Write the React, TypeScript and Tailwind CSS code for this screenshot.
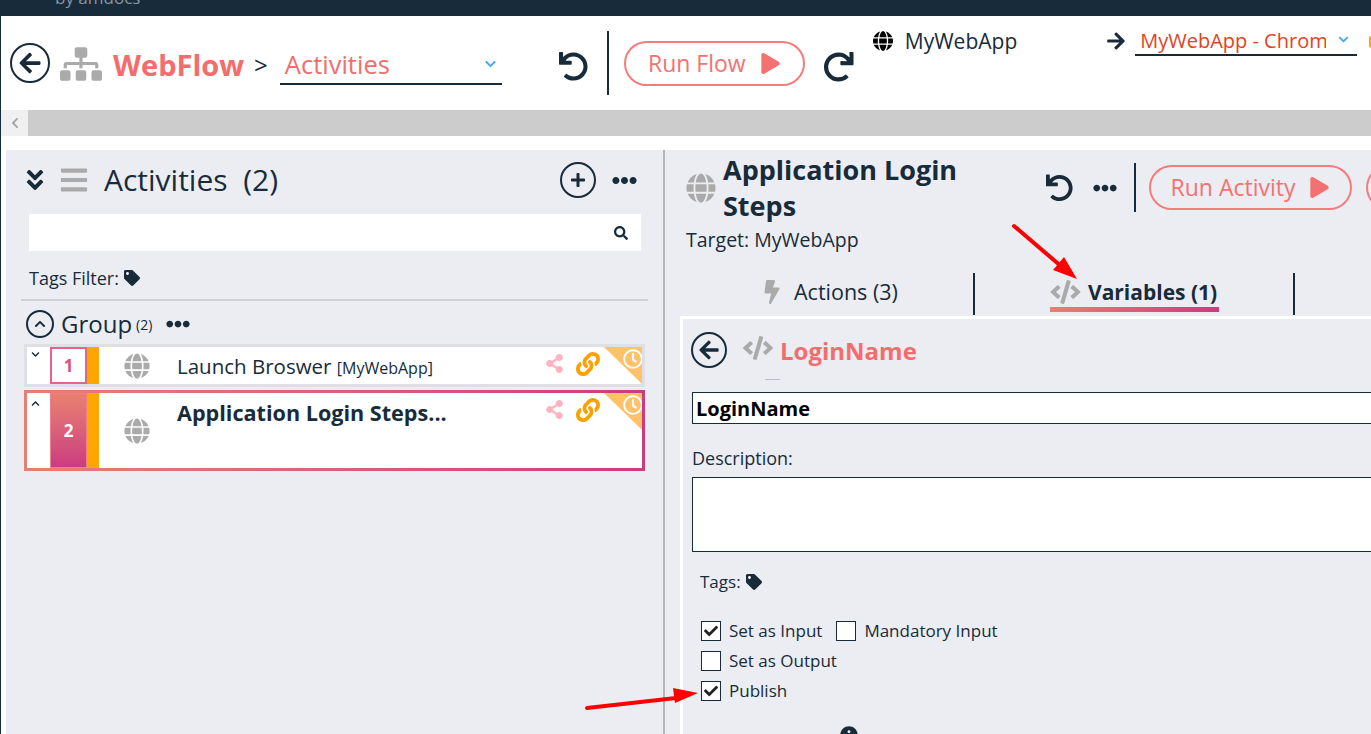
import React from 'react';
import {
  FaAngleDoubleDown,
  FaArrowLeft,
  FaArrowRight,
  FaBars,
  FaBolt,
  FaCheck,
  FaChevronDown,
  FaChevronUp,
  FaCode,
  FaEllipsisH,
  FaGlobe,
  FaInfoCircle,
  FaLink,
  FaPlay,
  FaPlus,
  FaRedo,
  FaRegClock,
  FaSearch,
  FaShareAlt,
  FaSitemap,
  FaTag,
  FaUndo,
} from 'react-icons/fa';

const BackButton: React.FC<{ size: string; icon: string }> = ({ size, icon }) => (
  <div className={`${size} flex shrink-0 items-center justify-center rounded-full border-2 border-[#172b3a] text-[#172b3a]`}>
    <FaArrowLeft className={icon} />
  </div>
);

const RunButton: React.FC<{ label: string; width: string; height: string }> = ({ label, width, height }) => (
  <div className={`${width} ${height} flex shrink-0 items-center justify-center gap-[14px] rounded-full border-2 border-[#f47c7c] bg-transparent text-[23px] text-[#f47171]`}>
    {label}
    <FaPlay className="h-[21px] w-[21px] shrink-0" />
  </div>
);

const Checkbox: React.FC<{ checked?: boolean; label: string; className?: string }> = ({ checked, label, className }) => (
  <div className={`flex h-[21px] items-center text-[17px] text-[#172b3a] ${className ?? ''}`}>
    <div className="flex h-[20px] w-[20px] shrink-0 items-center justify-center border border-[#172b3a] bg-white">
      {checked && <FaCheck className="h-[14px] w-[14px] text-[#222]" />}
    </div>
    <span className="ml-[8px] pt-px">{label}</span>
  </div>
);

const ActivityRow: React.FC<{
  index: number;
  active?: boolean;
  height: string;
  children: React.ReactNode;
}> = ({ index, active, height, children }) => (
  <div className={`${height} p-[3px] ${active ? 'bg-gradient-to-r from-[#e8806f] to-[#cc3a80]' : 'bg-[#dfe0e5]'}`}>
    <div className="relative flex h-full overflow-hidden bg-white">
      <div className="w-[23px] shrink-0 pl-[4px] pt-[1px] text-[#172b3a]">
        {active ? <FaChevronUp className="mt-[5px] h-[9px] w-[9px]" /> : <FaChevronDown className="mt-[2px] h-[9px] w-[9px]" />}
      </div>
      {active ? (
        <div className="flex w-[37px] shrink-0 items-center justify-center border border-[#ee7f8c] bg-gradient-to-b from-[#e8806f] to-[#cc3a80] text-[17px] font-bold text-white">
          {index}
        </div>
      ) : (
        <div className="flex w-[37px] shrink-0 items-center justify-center border-2 border-[#e5648a] text-[17px] font-bold text-[#d9557f]">
          {index}
        </div>
      )}
      <div className="w-[12px] shrink-0 bg-[#ffa500]" />
      <div className="flex w-[78px] shrink-0 items-center pl-[25px]">
        <FaGlobe className="h-[26px] w-[26px] shrink-0 text-[#aaaaaa]" />
      </div>
      <div className="min-w-0 flex-1">{children}</div>
      <FaShareAlt className="absolute left-[518px] top-[7px] h-[19px] w-[19px] text-[#ffb3c1]" />
      <FaLink className="absolute left-[549px] top-[5px] h-[24px] w-[24px] text-[#ffa000]" />
      <div className="absolute right-0 top-0 h-[37px] w-[38px] bg-[#ffc26b] [clip-path:polygon(0_0,100%_0,100%_100%)]" />
      <FaRegClock className="absolute right-[-1px] top-[2px] h-[20px] w-[20px] text-white" />
    </div>
  </div>
);

export default function App() {
  return (
    <div className="relative h-[734px] w-[1371px] overflow-hidden bg-white font-['Open_Sans',sans-serif] text-[#172b3a]">
      {/* Top strip */}
      <div className="relative h-[16px] overflow-hidden bg-[#172b3a]">
        <span className="absolute left-[55px] top-[-15px] text-[17px] text-[#8a97a1]">by amdocs</span>
      </div>

      <div className="flex h-[718px] border-l border-[#172b3a]">
        <div className="flex min-w-0 flex-1 flex-col">
          {/* Flow header */}
          <div className="flex h-[94px] shrink-0 overflow-hidden">
            <div className="ml-[9px] mt-[27px] shrink-0">
              <BackButton size="h-[40px] w-[40px]" icon="h-[24px] w-[24px]" />
            </div>
            <FaSitemap className="ml-[10px] mt-[27px] h-[42px] w-[42px] shrink-0 text-[#aaaaaa]" />
            <div className="ml-[11px] mt-[30px] shrink-0 text-[29px] font-bold leading-[38px] text-[#f56c6c]">WebFlow</div>
            <div className="ml-[10px] mt-[33px] shrink-0 text-[24px] leading-[32px]">&gt;</div>
            <div className="ml-[12px] mt-[34px] flex h-[35px] w-[222px] shrink-0 items-start justify-between border-b-2 border-[#172b3a] pl-[5px] pr-[5px]">
              <span className="mt-[-2px] text-[25.5px] leading-[32px] text-[#f56c6c]">Activities</span>
              <FaChevronDown className="mt-[8px] h-[12px] w-[13px] shrink-0 text-[#44a6f5]" />
            </div>
            <FaUndo className="ml-[56px] mt-[36px] h-[29px] w-[31px] shrink-0" />
            <div className="ml-[18px] mt-[15px] h-[64px] w-[2px] shrink-0 bg-[#172b3a]" />
            <div className="ml-[15px] mt-[25px] shrink-0">
              <RunButton label="Run Flow" width="w-[181px]" height="h-[45px]" />
            </div>
            <FaRedo className="ml-[18px] mt-[36px] h-[30px] w-[31px] shrink-0" />
            <FaGlobe className="ml-[19px] mt-[14px] h-[22px] w-[20px] shrink-0 text-black" />
            <div className="ml-[12px] mt-[11px] shrink-0 text-[21px] leading-[28px]">MyWebApp</div>
            <FaArrowRight className="ml-[89px] mt-[15px] h-[20px] w-[20px] shrink-0" />
            <div className="ml-[9px] mt-[9px] flex h-[31px] w-[222px] shrink-0 items-start border-b-2 border-[#172b3a] pl-[5px]">
              <span className="mt-px w-[186px] shrink-0 overflow-hidden whitespace-nowrap text-[20px] leading-[30px] text-[#e2431e]">MyWebApp - Chrome</span>
              <FaChevronDown className="ml-[11px] mt-[9px] h-[11px] w-[13px] shrink-0 text-[#44a6f5]" />
            </div>
            <div className="ml-[12px] mt-[20px] h-[12px] w-[4px] shrink-0 rounded-full bg-[#ffa500]" />
          </div>

          {/* Horizontal scroller */}
          <div className="flex h-[26px] shrink-0 bg-[#cccccc]">
            <div className="flex w-[27px] items-center justify-center bg-[#f0f0f0] text-[#a6a6a6]">
              <FaChevronDown className="h-[12px] w-[12px] rotate-90" />
            </div>
          </div>
          <div className="h-[14px] shrink-0" />

          <div className="flex min-h-0 flex-1 pl-[5px]">
            {/* Activities panel */}
            <div className="w-[657px] shrink-0 bg-[#ecedf3] pl-[15px]">
              <div className="flex h-[60px] items-center">
                <FaAngleDoubleDown className="ml-[5px] h-[26px] w-[18px] shrink-0" />
                <FaBars className="ml-[16px] h-[30px] w-[28px] shrink-0 text-[#aaaaaa]" />
                <div className="ml-[16px] whitespace-pre text-[30px] leading-[40px]">Activities  (2)</div>
                <div className="ml-[282px] flex h-[36px] w-[36px] shrink-0 items-center justify-center rounded-full border-2 border-[#172b3a]">
                  <FaPlus className="h-[16px] w-[16px]" />
                </div>
                <FaEllipsisH className="ml-[16px] h-[25px] w-[25px] shrink-0" />
              </div>
              <div className="ml-[8px] mt-[4px] flex h-[37px] w-[612px] items-center justify-end bg-white pr-[13px]">
                <FaSearch className="h-[14px] w-[14px]" />
              </div>
              <div className="ml-[8px] mt-[15px] flex h-[24px] items-center text-[18px]">
                Tags Filter:
                <FaTag className="ml-[5px] h-[16px] w-[16px]" />
              </div>
              <div className="mr-[15px] mt-[9px] h-[2px] bg-[#cfd0d4]" />
              <div className="ml-[5px] mt-[9px] flex h-[28px] items-center">
                <div className="flex h-[28px] w-[28px] items-center justify-center rounded-full border-2 border-[#172b3a]">
                  <FaChevronUp className="h-[12px] w-[12px]" />
                </div>
                <span className="ml-[7px] text-[24px] leading-[32px]">Group</span>
                <span className="ml-[4px] text-[14px]">(2)</span>
                <FaEllipsisH className="ml-[14px] h-[24px] w-[24px]" />
              </div>
              <div className="ml-[3px] mt-[6px] flex w-[621px] flex-col gap-[3px]">
                <ActivityRow index={1} height="h-[43px]">
                  <div className="whitespace-nowrap pt-[4px] text-[20.5px] leading-[30px]">
                    Launch Broswer <span className="text-[16px]">[MyWebApp]</span>
                  </div>
                </ActivityRow>
                <ActivityRow index={2} active height="h-[81px]">
                  <div className="whitespace-nowrap text-[21.6px] font-bold leading-[40px]">Application Login Steps...</div>
                </ActivityRow>
              </div>
            </div>

            <div className="w-[2px] shrink-0 bg-[#b5b5b5]" />

            {/* Activity details */}
            <div className="min-w-0 flex-1 overflow-hidden bg-[#ecedf3]">
              <div className="flex h-[123px] pl-[21px]">
                <div className="w-[262px] shrink-0">
                  <div className="flex h-[72px] w-[290px] items-center">
                    <FaGlobe className="mt-[4px] h-[30px] w-[30px] shrink-0 text-[#aaaaaa]" />
                    <div className="ml-[7px] w-[270px] pt-[4px] text-[27px] font-bold leading-[36px]">
                      Application Login Steps
                    </div>
                  </div>
                  <div className="mt-[5px] text-[19.5px] leading-[26px]">Target: MyWebApp</div>
                </div>
                <div className="mt-[13px] flex h-[49px] shrink-0 items-center pl-[98px]">
                  <FaUndo className="h-[28px] w-[27px] shrink-0" />
                  <FaEllipsisH className="ml-[20px] h-[24px] w-[24px] shrink-0" />
                  <div className="ml-[17px] h-[49px] w-[2px] shrink-0 bg-[#172b3a]" />
                  <div className="ml-[13px] shrink-0">
                    <RunButton label="Run Activity" width="w-[203px]" height="h-[45px]" />
                  </div>
                  <div className="ml-[14px] h-[45px] w-[30px] shrink-0 rounded-l-full border-2 border-r-0 border-[#f47c7c]" />
                </div>
              </div>

              {/* Tabs */}
              <div className="flex h-[42px]">
                <div className="flex w-[310px] shrink-0 items-center border-r-2 border-[#172b3a] pb-[4px] pl-[98px]">
                  <FaBolt className="h-[24px] w-[18px] shrink-0 text-[#aaaaaa]" />
                  <span className="ml-[13px] text-[21.5px] leading-[28px]">Actions (3)</span>
                </div>
                <div className="w-[320px] shrink-0 border-r-2 border-[#172b3a] pl-[75px]">
                  <div className="flex h-[39px] w-[169px] items-center border-b-[5px] border-transparent pt-[3px] [border-image:linear-gradient(to_right,#e8806f,#cc3a80)_1]">
                    <FaCode className="h-[24px] w-[31px] shrink-0 text-[#aaaaaa]" />
                    <span className="ml-[7px] whitespace-nowrap text-[21px] font-bold leading-[28px]">Variables (1)</span>
                  </div>
                </div>
              </div>

              {/* Variable editor */}
              <div className="ml-[15px] mt-[1px] h-[422px] border-l-[3px] border-t-[3px] border-white pl-[8px]">
                <div className="flex h-[60px] items-start pt-[13px]">
                  <BackButton size="h-[36px] w-[36px]" icon="h-[22px] w-[22px]" />
                  <FaCode className="ml-[16px] mt-[3px] h-[26px] w-[30px] shrink-0 text-[#aaaaaa]" />
                  <span className="ml-[7px] mt-[2px] text-[24px] font-bold leading-[34px] text-[#f56c6c]">LoginName</span>
                </div>
                <div className="ml-[74px] h-px w-[15px] bg-[#b9bec4]" />
                <div className="-mr-[5px] ml-px mt-[12px] flex h-[32px] items-center border border-[#172b3a] bg-white pl-[3px] pt-px text-[20px] font-bold text-black">
                  LoginName
                </div>
                <div className="ml-px mt-[22px] text-[18px] leading-[24px]">Description:</div>
                <div className="-mr-[5px] ml-px mt-[7px] h-[75px] border border-[#172b3a] bg-white" />
                <div className="ml-[9px] mt-[18px] flex h-[24px] items-center text-[17px]">
                  Tags:
                  <FaTag className="ml-[5px] h-[16px] w-[16px]" />
                </div>
                <div className="ml-[10px] mt-[26px] flex flex-col gap-[9px]">
                  <div className="flex">
                    <Checkbox checked label="Set as Input" />
                    <Checkbox label="Mandatory Input" className="ml-[14px]" />
                  </div>
                  <Checkbox label="Set as Output" />
                  <Checkbox checked label="Publish" />
                </div>
                <FaInfoCircle className="ml-[149px] mt-[25px] h-[18px] w-[18px]" />
              </div>
            </div>
          </div>
        </div>
      </div>

      {/* Red annotation arrows */}
      <svg className="absolute left-[1010px] top-[222px] h-[62px] w-[72px]" viewBox="1010 222 72 62" fill="#ff0000">
        <path d="M1014 226 L1062 267" stroke="#ff0000" strokeWidth="4" strokeLinecap="round" />
        <polygon points="1077,279 1053,270 1064,257" />
      </svg>
      <svg className="absolute left-[580px] top-[685px] h-[28px] w-[122px]" viewBox="580 685 122 28" fill="#ff0000">
        <path d="M587 708 L676 698" stroke="#ff0000" strokeWidth="4" strokeLinecap="round" />
        <polygon points="698,693 673,688 675,703" />
      </svg>
    </div>
  );
}
